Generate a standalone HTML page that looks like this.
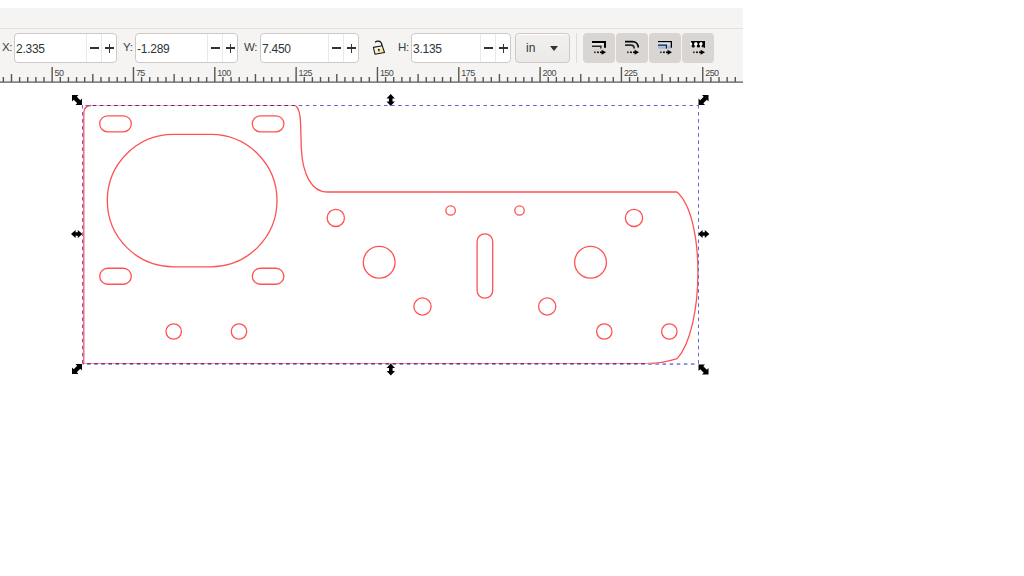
<!DOCTYPE html>
<html><head><meta charset="utf-8">
<style>
html,body{margin:0;padding:0;background:#fff;}
body{width:1024px;height:576px;position:relative;overflow:hidden;font-family:"Liberation Sans",sans-serif;}
#app{position:absolute;left:0;top:8px;width:743px;height:75px;background:#f5f4f2;}
#tbsep{position:absolute;left:0;top:20px;width:743px;height:1.4px;background:#e4e1de;}
.lbl{position:absolute;top:41px;font-size:11.5px;color:#3a3e40;line-height:13px;letter-spacing:-0.3px;}
.spin{position:absolute;top:33px;height:30px;box-sizing:border-box;border:1px solid #cfc9c4;border-radius:4px;background:#fff;}
.spin .val{position:absolute;left:1px;top:8px;font-size:12px;color:#2e3436;line-height:14px;letter-spacing:-0.25px;}
.spin .sep{position:absolute;top:0;width:1px;height:28px;background:#ebe8e5;}
.minus{position:absolute;top:13.1px;width:9px;height:1.8px;background:#2e3436;}
.plus{position:absolute;top:9.6px;width:9px;height:9px;}
.plus:before{content:"";position:absolute;left:0;top:3.5px;width:9px;height:1.8px;background:#2e3436;}
.plus i{position:absolute;left:3.6px;top:0;width:1.8px;height:9px;background:#2e3436;}
#unit{position:absolute;left:515px;top:33px;width:55px;height:30px;box-sizing:border-box;border:1px solid #cfc9c4;border-radius:4px;background:linear-gradient(#f2f1ef,#ebe9e7);box-shadow:inset 0 1px 0 #fff;}
#unit span{position:absolute;left:10px;top:7px;font-size:12px;color:#2e3436;line-height:14px;}
#unit b{position:absolute;left:34px;top:12px;width:0;height:0;border-left:4.5px solid transparent;border-right:4.5px solid transparent;border-top:5px solid #2e3436;}
#vsep{position:absolute;left:576px;top:33px;width:1px;height:30px;background:#dedbd8;}
.btn{position:absolute;top:33px;width:32px;height:30px;background:#d9d5d2;border-radius:4px;}
#ruler{position:absolute;left:0;top:0;}
#ruler text{font-family:"Liberation Sans",sans-serif;font-size:9px;fill:#45484a;letter-spacing:-0.55px;}
#canvas{position:absolute;left:0;top:0;}
</style></head><body>
<div id="app"><div id="tbsep"></div></div>
<div class="lbl" style="left:2px">X:</div>
<div class="spin" style="left:14px;width:103px">
  <div class="val">2.335</div>
  <div class="sep" style="left:71px"></div>
  <div class="sep" style="left:86px"></div>
  <div class="minus" style="left:75px"></div>
  <div class="plus" style="left:90px"><i></i></div>
</div>
<div class="lbl" style="left:123px">Y:</div>
<div class="spin" style="left:135px;width:103px">
  <div class="val">-1.289</div>
  <div class="sep" style="left:71px"></div>
  <div class="sep" style="left:86px"></div>
  <div class="minus" style="left:75px"></div>
  <div class="plus" style="left:90px"><i></i></div>
</div>
<div class="lbl" style="left:244px">W:</div>
<div class="spin" style="left:260px;width:99px">
  <div class="val">7.450</div>
  <div class="sep" style="left:67px"></div>
  <div class="sep" style="left:82px"></div>
  <div class="minus" style="left:71px"></div>
  <div class="plus" style="left:86px"><i></i></div>
</div>
<div class="lbl" style="left:398px">H:</div>
<div class="spin" style="left:411px;width:100px">
  <div class="val">3.135</div>
  <div class="sep" style="left:68px"></div>
  <div class="sep" style="left:83px"></div>
  <div class="minus" style="left:72px"></div>
  <div class="plus" style="left:87px"><i></i></div>
</div>
<div id="unit"><span>in</span><b></b></div>
<div id="vsep"></div>
<div class="btn" style="left:583px"></div>
<div class="btn" style="left:616px"></div>
<div class="btn" style="left:649px"></div>
<div class="btn" style="left:682px"></div>
<svg id="ruler" width="743" height="84" viewBox="0 0 743 84">
<g fill="#555753">
<rect x="2.65" y="77" width="1.4" height="5" />
<rect x="10.79" y="74" width="1.4" height="8" />
<rect x="18.92" y="77" width="1.4" height="5" />
<rect x="27.05" y="77" width="1.4" height="5" />
<rect x="35.19" y="77" width="1.4" height="5" />
<rect x="43.32" y="77" width="1.4" height="5" />
<rect x="51.45" y="67" width="1.4" height="15" />
<text x="54.60" y="75.5">50</text>
<rect x="59.58" y="77" width="1.4" height="5" />
<rect x="67.72" y="77" width="1.4" height="5" />
<rect x="75.85" y="77" width="1.4" height="5" />
<rect x="83.98" y="77" width="1.4" height="5" />
<rect x="92.11" y="74" width="1.4" height="8" />
<rect x="100.25" y="77" width="1.4" height="5" />
<rect x="108.38" y="77" width="1.4" height="5" />
<rect x="116.51" y="77" width="1.4" height="5" />
<rect x="124.64" y="77" width="1.4" height="5" />
<rect x="132.77" y="67" width="1.4" height="15" />
<text x="135.92" y="75.5">75</text>
<rect x="140.91" y="77" width="1.4" height="5" />
<rect x="149.04" y="77" width="1.4" height="5" />
<rect x="157.17" y="77" width="1.4" height="5" />
<rect x="165.31" y="77" width="1.4" height="5" />
<rect x="173.44" y="74" width="1.4" height="8" />
<rect x="181.57" y="77" width="1.4" height="5" />
<rect x="189.70" y="77" width="1.4" height="5" />
<rect x="197.83" y="77" width="1.4" height="5" />
<rect x="205.97" y="77" width="1.4" height="5" />
<rect x="214.10" y="67" width="1.4" height="15" />
<text x="217.25" y="75.5">100</text>
<rect x="222.23" y="77" width="1.4" height="5" />
<rect x="230.37" y="77" width="1.4" height="5" />
<rect x="238.50" y="77" width="1.4" height="5" />
<rect x="246.63" y="77" width="1.4" height="5" />
<rect x="254.76" y="74" width="1.4" height="8" />
<rect x="262.89" y="77" width="1.4" height="5" />
<rect x="271.03" y="77" width="1.4" height="5" />
<rect x="279.16" y="77" width="1.4" height="5" />
<rect x="287.29" y="77" width="1.4" height="5" />
<rect x="295.43" y="67" width="1.4" height="15" />
<text x="298.58" y="75.5">125</text>
<rect x="303.56" y="77" width="1.4" height="5" />
<rect x="311.69" y="77" width="1.4" height="5" />
<rect x="319.82" y="77" width="1.4" height="5" />
<rect x="327.95" y="77" width="1.4" height="5" />
<rect x="336.09" y="74" width="1.4" height="8" />
<rect x="344.22" y="77" width="1.4" height="5" />
<rect x="352.35" y="77" width="1.4" height="5" />
<rect x="360.49" y="77" width="1.4" height="5" />
<rect x="368.62" y="77" width="1.4" height="5" />
<rect x="376.75" y="67" width="1.4" height="15" />
<text x="379.90" y="75.5">150</text>
<rect x="384.88" y="77" width="1.4" height="5" />
<rect x="393.01" y="77" width="1.4" height="5" />
<rect x="401.15" y="77" width="1.4" height="5" />
<rect x="409.28" y="77" width="1.4" height="5" />
<rect x="417.41" y="74" width="1.4" height="8" />
<rect x="425.55" y="77" width="1.4" height="5" />
<rect x="433.68" y="77" width="1.4" height="5" />
<rect x="441.81" y="77" width="1.4" height="5" />
<rect x="449.94" y="77" width="1.4" height="5" />
<rect x="458.07" y="67" width="1.4" height="15" />
<text x="461.23" y="75.5">175</text>
<rect x="466.21" y="77" width="1.4" height="5" />
<rect x="474.34" y="77" width="1.4" height="5" />
<rect x="482.47" y="77" width="1.4" height="5" />
<rect x="490.61" y="77" width="1.4" height="5" />
<rect x="498.74" y="74" width="1.4" height="8" />
<rect x="506.87" y="77" width="1.4" height="5" />
<rect x="515.00" y="77" width="1.4" height="5" />
<rect x="523.13" y="77" width="1.4" height="5" />
<rect x="531.27" y="77" width="1.4" height="5" />
<rect x="539.40" y="67" width="1.4" height="15" />
<text x="542.55" y="75.5">200</text>
<rect x="547.53" y="77" width="1.4" height="5" />
<rect x="555.67" y="77" width="1.4" height="5" />
<rect x="563.80" y="77" width="1.4" height="5" />
<rect x="571.93" y="77" width="1.4" height="5" />
<rect x="580.06" y="74" width="1.4" height="8" />
<rect x="588.20" y="77" width="1.4" height="5" />
<rect x="596.33" y="77" width="1.4" height="5" />
<rect x="604.46" y="77" width="1.4" height="5" />
<rect x="612.59" y="77" width="1.4" height="5" />
<rect x="620.73" y="67" width="1.4" height="15" />
<text x="623.88" y="75.5">225</text>
<rect x="628.86" y="77" width="1.4" height="5" />
<rect x="636.99" y="77" width="1.4" height="5" />
<rect x="645.12" y="77" width="1.4" height="5" />
<rect x="653.26" y="77" width="1.4" height="5" />
<rect x="661.39" y="74" width="1.4" height="8" />
<rect x="669.52" y="77" width="1.4" height="5" />
<rect x="677.65" y="77" width="1.4" height="5" />
<rect x="685.79" y="77" width="1.4" height="5" />
<rect x="693.92" y="77" width="1.4" height="5" />
<rect x="702.05" y="67" width="1.4" height="15" />
<text x="705.20" y="75.5">250</text>
<rect x="710.18" y="77" width="1.4" height="5" />
<rect x="718.32" y="77" width="1.4" height="5" />
<rect x="726.45" y="77" width="1.4" height="5" />
<rect x="734.58" y="77" width="1.4" height="5" />
</g>
<rect x="0" y="81.5" width="743" height="1.2" fill="#555753"/>
</svg>
<svg id="icons" width="743" height="84" style="position:absolute;left:0;top:0">
<g transform="translate(587,36)">
<path d="M5,5 L19,5 L19,11.8 L17,11.8 L17,7.1 L5,7.1 Z" fill="#000"/>
<path d="M5,9.4 L14.6,9.4 L14.6,12.6 L13.1,12.6 L13.1,11 L5,11 Z" fill="#2b2b2b"/>
<rect x="5" y="7.4" width="11.7" height="1.6" fill="#fff" opacity="0.55"/>
</g>
<g transform="translate(587,36)"><rect x="7.1" y="15.5" width="1.6" height="1.6" fill="#2a2a2a"/><rect x="10" y="15.5" width="1.9" height="1.6" fill="#111"/><rect x="13" y="15.5" width="2.2" height="1.6" fill="#000"/><path d="M14.6,13.8 L19,16.3 L14.6,18.7 Z" fill="#000"/></g>
<g transform="translate(620,36)" fill="none">
<path d="M5,5.6 L12.5,5.6 C15.8,5.6 18.3,8 18.3,11.6" stroke="#000" stroke-width="1.7"/>
<path d="M5,9.1 L11,9.1 C13,9.1 14.2,10.5 14.2,12.6" stroke="#2b2b2b" stroke-width="1.7"/>
</g>
<g transform="translate(620,36)"><rect x="7.1" y="15.5" width="1.6" height="1.6" fill="#2a2a2a"/><rect x="10" y="15.5" width="1.9" height="1.6" fill="#111"/><rect x="13" y="15.5" width="2.2" height="1.6" fill="#000"/><path d="M14.6,13.8 L19,16.3 L14.6,18.7 Z" fill="#000"/></g>
<g transform="translate(653,36)">
<defs><linearGradient id="bg3" x1="0" y1="0" x2="0" y2="1"><stop offset="0" stop-color="#eef4fb"/><stop offset="1" stop-color="#8fb2d8"/></linearGradient></defs>
<rect x="5" y="6" width="12.8" height="6.5" fill="url(#bg3)"/>
<path d="M5,5 L19,5 L19,11.8 L17.7,11.8 L17.7,6.2 L5,6.2 Z" fill="#000"/>
<path d="M5,8.5 L14,8.5 L14,12.6 L12.9,12.6 L12.9,9.7 L5,9.7 Z" fill="#1a1a1a"/>
</g>
<g transform="translate(653,36)"><rect x="7.1" y="15.5" width="1.6" height="1.6" fill="#2a2a2a"/><rect x="10" y="15.5" width="1.9" height="1.6" fill="#111"/><rect x="13" y="15.5" width="2.2" height="1.6" fill="#000"/><path d="M14.6,13.8 L19,16.3 L14.6,18.7 Z" fill="#000"/></g>
<g transform="translate(686,36)">
<path d="M5,5 L19,5 L19,11.7 L17.6,11.7 L17.6,6.6 L5,6.6 Z" fill="#000"/>
<path d="M5.6,6 L8.8,6 L7.2,11.4 Z M10.9,6 L13.9,6 L12.4,11.4 Z" fill="#000"/>
<circle cx="7.2" cy="10" r="1.6" fill="#000"/><circle cx="12.4" cy="10" r="1.6" fill="#000"/><circle cx="16.8" cy="10" r="1.2" fill="#000"/>
<rect x="16" y="6" width="2" height="3.5" fill="#000"/>
<circle cx="9.9" cy="7.8" r="1.6" fill="#fff"/><circle cx="15" cy="7.8" r="1.6" fill="#fff"/><circle cx="5" cy="7.9" r="1.1" fill="#fff"/>
</g>
<g transform="translate(686,36)"><rect x="7.1" y="15.5" width="1.6" height="1.6" fill="#2a2a2a"/><rect x="10" y="15.5" width="1.9" height="1.6" fill="#111"/><rect x="13" y="15.5" width="2.2" height="1.6" fill="#000"/><path d="M14.6,13.8 L19,16.3 L14.6,18.7 Z" fill="#000"/></g>
<g transform="translate(370,38)">
<defs><linearGradient id="lk" x1="0" y1="0" x2="1" y2="1"><stop offset="0.15" stop-color="#ffffff"/><stop offset="0.9" stop-color="#efe07a"/></linearGradient></defs>
<path d="M5.2,4.4 C6,3.1 8.4,2.8 10,3.5 C11.3,4.2 11.9,5.6 12.1,7.9" fill="none" stroke="#1a1a1a" stroke-width="1.4"/>
<path d="M3.4,9.4 L12.3,7.8 L14.5,14.5 L5,16.2 Z" fill="url(#lk)" stroke="#1a1a1a" stroke-width="1.1" stroke-linejoin="round"/>
<circle cx="8.8" cy="11.6" r="0.95" fill="#111"/><path d="M8.3,12 L9.4,11.9 L9.5,13.3 L8.7,13.4 Z" fill="#111"/>
</g>
</svg>
<svg id="canvas" width="1024" height="576" viewBox="0 0 1024 576" style="top:0">
<g fill="none" stroke="#ff5252" stroke-width="1.3">
<path d="M295.5,105.5 C298.5,108 300.2,112 300.5,122 L301.3,148 C302.5,175 312,192 327,192 L676.9,192 C705.3,216 704.5,328 677.2,358.6 Q661,363.5 648,363.5 M83.8,364 L83.8,113 Q83.8,105.5 91.3,105.5"/>
<rect x="99.7" y="115.8" width="31.6" height="16" rx="8" ry="8"/>
<rect x="252.3" y="115.8" width="31.6" height="16" rx="8" ry="8"/>
<rect x="99.7" y="268.25" width="31.6" height="16" rx="8" ry="8"/>
<rect x="252.3" y="268.25" width="31.6" height="16" rx="8" ry="8"/>
<rect x="107.3" y="134.4" width="169.7" height="132.4" rx="66.2" ry="66.2"/>
<circle cx="173.7" cy="331.5" r="7.7"/>
<circle cx="239" cy="331.5" r="7.7"/>
<circle cx="604.3" cy="331.5" r="7.7"/>
<circle cx="669.35" cy="331.5" r="7.7"/>
<circle cx="335.8" cy="217.9" r="8.6"/>
<circle cx="634" cy="217.9" r="8.6"/>
<circle cx="422.5" cy="306.5" r="8.6"/>
<circle cx="547.2" cy="306.5" r="8.6"/>
<circle cx="379.2" cy="262.3" r="15.9"/>
<circle cx="590.5" cy="262.3" r="15.9"/>
<circle cx="450.6" cy="210.5" r="4.7"/>
<circle cx="519.5" cy="210.5" r="4.7"/>
<rect x="477.1" y="233.8" width="15.6" height="64.4" rx="7.8" ry="7.8"/>
</g>
<rect x="91" y="105" width="205" height="1" fill="#ffb0b0"/>
<rect x="83.5" y="363" width="565" height="1" fill="#ff8a8a"/>
<g fill="none" stroke-width="1" stroke-dasharray="3.6 3.504">
<path d="M82.5,105.5 L91,105.5" stroke="#6464e0" stroke-dashoffset="4.01"/>
<path d="M91,105.5 L295.5,105.5" stroke="#6a1f9a" stroke-dashoffset="12.51"/>
<path d="M295.5,105.5 L698.5,105.5" stroke="#6262e0" stroke-dashoffset="217.01"/>
<path d="M82.5,363.5 L648,363.5" stroke="#9a2a84" stroke-dashoffset="2.51"/>
<path d="M648,363.5 L698.5,363.5" stroke="#a0a0e8" stroke-dashoffset="568.01"/>
<path d="M82.5,364.5 L698.5,364.5" stroke="#8a8ae8" stroke-dashoffset="2.51"/>
<path d="M82.5,104.9 L82.5,364" stroke="#6464e0" stroke-dasharray="3.6 3.485"/>
<path d="M698.5,104.9 L698.5,364" stroke="#6464e0" stroke-dasharray="3.6 3.485"/>
</g>
<path transform="translate(72,95)" d="M0,0 L6.5,0 L4.8,1.7 L8.3,5.2 L10,3.5 L10,10 L3.5,10 L5.2,8.3 L1.7,4.8 L0,6.5 Z" fill="#000" stroke="#fff" stroke-width="0.6" paint-order="stroke"/>
<path transform="translate(698.5,95)" d="M10,0 L3.5,0 L5.2,1.7 L1.7,5.2 L0,3.5 L0,10 L6.5,10 L4.8,8.3 L8.3,4.8 L10,6.5 Z" fill="#000" stroke="#fff" stroke-width="0.6" paint-order="stroke"/>
<path transform="translate(72,364)" d="M10,0 L3.5,0 L5.2,1.7 L1.7,5.2 L0,3.5 L0,10 L6.5,10 L4.8,8.3 L8.3,4.8 L10,6.5 Z" fill="#000" stroke="#fff" stroke-width="0.6" paint-order="stroke"/>
<path transform="translate(698.5,364.5)" d="M0,0 L6.5,0 L4.8,1.7 L8.3,5.2 L10,3.5 L10,10 L3.5,10 L5.2,8.3 L1.7,4.8 L0,6.5 Z" fill="#000" stroke="#fff" stroke-width="0.6" paint-order="stroke"/>
<path transform="translate(386.5,94)" d="M4.2,0 L8.4,4.6 L6,4.6 L6,7.4 L8.4,7.4 L4.2,12 L0,7.4 L2.4,7.4 L2.4,4.6 L0,4.6 Z" fill="#000" stroke="#fff" stroke-width="0.6" paint-order="stroke"/>
<path transform="translate(386.6,363.5)" d="M4.2,0 L8.4,4.6 L6,4.6 L6,7.4 L8.4,7.4 L4.2,12 L0,7.4 L2.4,7.4 L2.4,4.6 L0,4.6 Z" fill="#000" stroke="#fff" stroke-width="0.6" paint-order="stroke"/>
<path transform="translate(71,229.9)" d="M0,4.1 L4.6,0 L4.6,2.3 L6.8,2.3 L6.8,0 L11.4,4.1 L6.8,8.2 L6.8,5.9 L4.6,5.9 L4.6,8.2 Z" fill="#000" stroke="#fff" stroke-width="0.6" paint-order="stroke"/>
<path transform="translate(698,229.9)" d="M0,4.1 L4.6,0 L4.6,2.3 L6.8,2.3 L6.8,0 L11.4,4.1 L6.8,8.2 L6.8,5.9 L4.6,5.9 L4.6,8.2 Z" fill="#000" stroke="#fff" stroke-width="0.6" paint-order="stroke"/>
</svg>
</body></html>
